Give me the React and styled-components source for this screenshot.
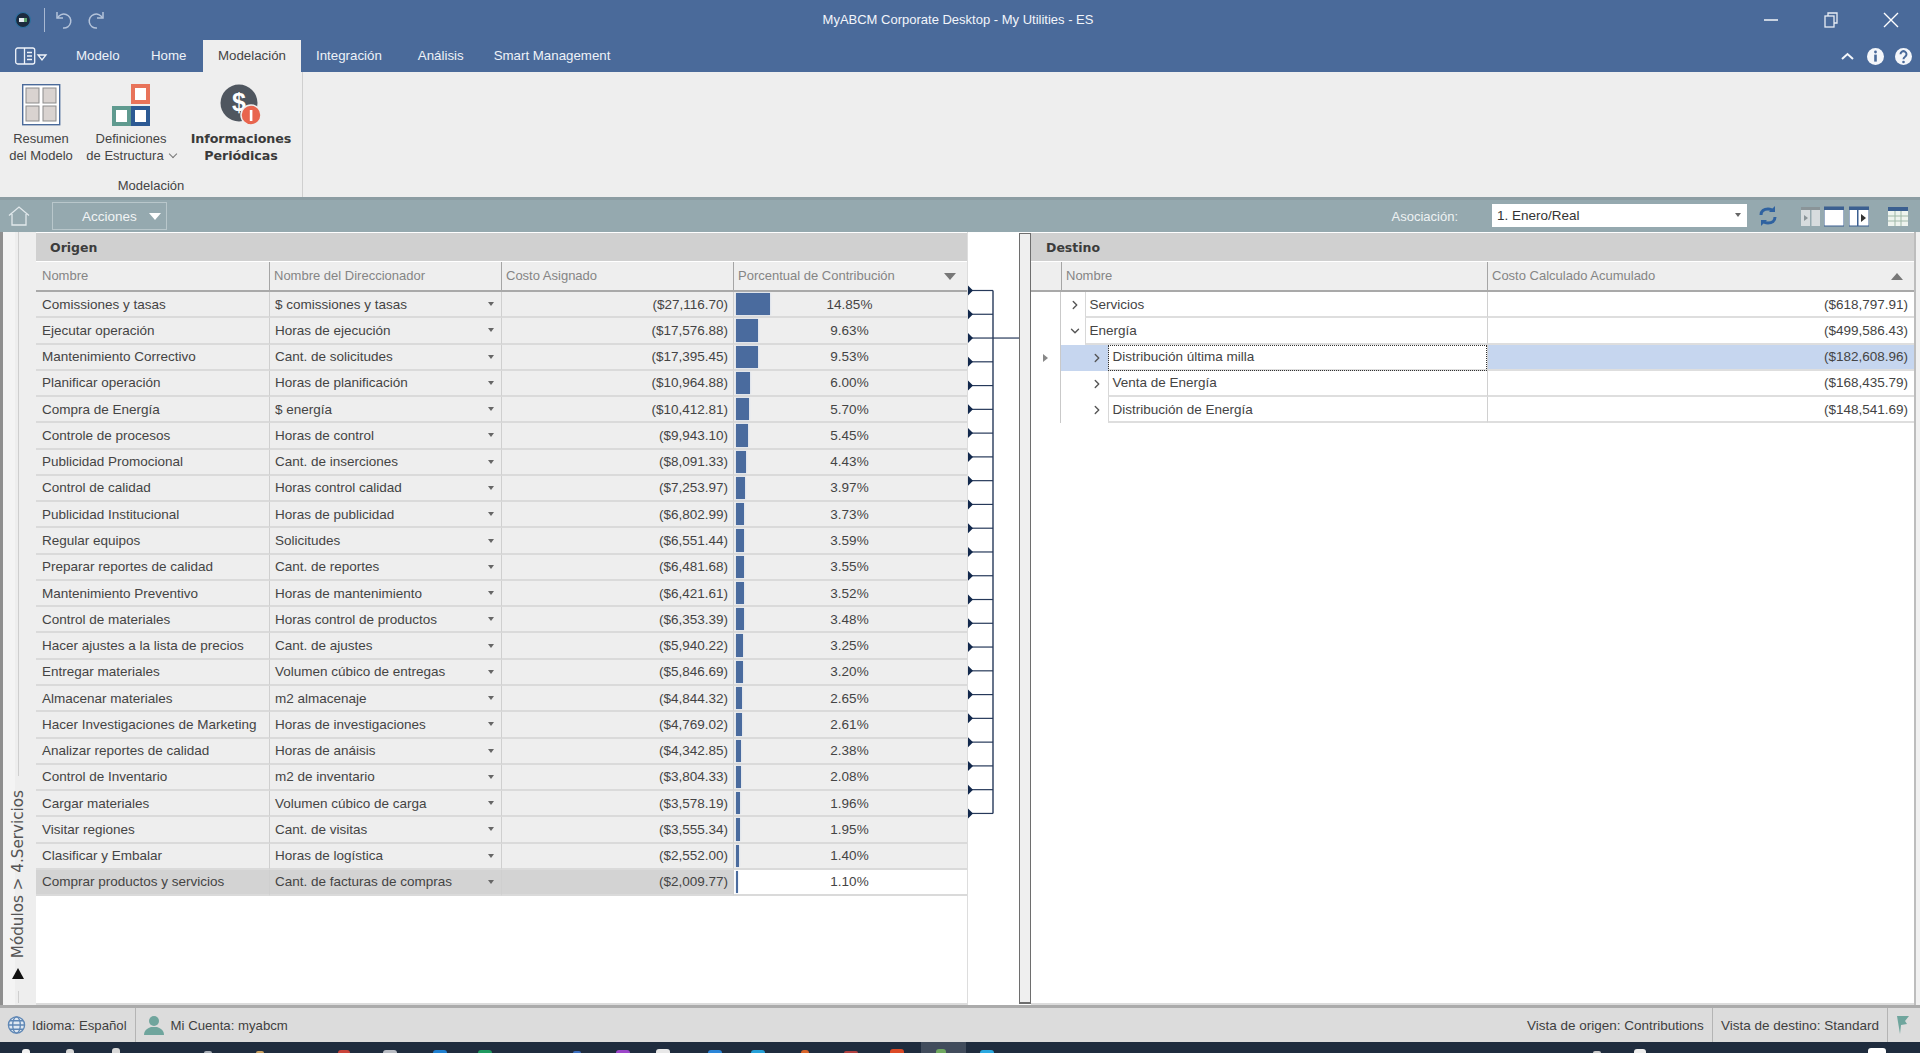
import React from 'react';
import styled, { createGlobalStyle } from 'styled-components';
import { ChevronRight, ChevronDown } from 'lucide-react';

const Global = createGlobalStyle`
  html, body { margin: 0; padding: 0; background: #fff; }
  * { box-sizing: border-box; }
  body { font-family: "Liberation Sans", Arial, sans-serif; }
`;

const ROW = 26.27;
const FONT = '"Liberation Sans", Arial, sans-serif';

const Shell = styled.div`
  width: 1920px; height: 1053px; overflow: hidden; display: flex; flex-direction: column;
  font-family: ${FONT}; font-size: 13.5px; color: #444;
`;
const TitleBar = styled.div`
  height: 40px; flex: none; background: #4a6a9a; display: flex; align-items: center; position: relative;
  padding-left: 13px;
`;
const TitleText = styled.div`
  position: absolute; left: 0; right: 4px; top: 0; height: 40px; line-height: 40px; text-align: center;
  color: #f2f5fa; font-size: 13px;
`;
const QuickSep = styled.div`width: 1px; height: 24px; background: #a8b8d2; margin: 0 9px 0 11px;`;
const QuickIcon = styled.svg`width: 20px; height: 20px; margin-right: 12px; flex: none;`;
const WinControls = styled.div`margin-left: auto; display: flex; z-index: 1; padding-right: 20px; gap: 42px;`;
const WinIcon = styled.svg`width: 18px; height: 18px; display: block;`;

const TabBar = styled.div`
  height: 32px; flex: none; background: #4a6a9a; display: flex; align-items: stretch; padding-left: 15px;
`;
const AppMenu = styled.svg`width: 34px; height: 20px; align-self: center; flex: none; margin-right: 27px;`;
const Tab = styled.div`
  padding: 0 ${p => p.$pad ?? 9}px; margin-right: ${p => p.$gap ?? 0}px; line-height: 32px; color: #eef2f8; font-size: 13.3px;
  ${p => p.$active && 'background:#eeeeee;color:#444;'}
`;
const TabTools = styled.div`margin-left: auto; display: flex; align-items: center; gap: 9px; padding-right: 7px;`;
const ToolGlyph = styled.svg`width: 19px; height: 19px; display: block;`;

const Ribbon = styled.div`height: 125px; flex: none; background: #eeeeee; display: flex;`;
const RibbonGroup = styled.div`
  width: 303px; border-right: 1px solid #cfcfcf; display: flex; flex-direction: column; align-items: stretch;
`;
const RibbonItems = styled.div`display: flex; padding-top: 12px; height: 106px;`;
const RibbonItem = styled.div`
  width: ${p => p.$w}px; display: flex; flex-direction: column; align-items: center; flex: none;
`;
const RibbonIcon = styled.svg`width: 44px; height: 42px; display: block; margin-bottom: 5px;`;
const RibbonLabel = styled.div`
  font-size: 13px; line-height: 16.5px; text-align: center; color: #444; white-space: nowrap;
  ${p => p.$bold && `font-weight: 700; font-family: "DejaVu Sans", sans-serif; font-size: 12.7px; color:#3a3a3a; letter-spacing: -0.1px;`}
`;
const SmallChev = styled.span`
  display: inline-block; width: 6px; height: 6px; border-right: 1.5px solid #777; border-bottom: 1.5px solid #777;
  transform: rotate(45deg); margin: 0 0 3px 6px;
`;
const GroupName = styled.div`text-align: center; font-size: 13px; color: #444; line-height: 16px;`;

const Toolbar = styled.div`
  height: 35px; flex: none; background: #95a9af; border-top: 3px solid #8c9da3; display: flex; align-items: center; padding-left: 8px;
`;
const HomeIcon = styled.svg`width: 22px; height: 20px; margin-right: 22px; flex: none;`;
const ActionBtn = styled.div`
  width: 115px; height: 28px; border: 1px solid #b9c7cb; color: #f1f4f5; display: flex; align-items: center;
  font-size: 13.5px; padding-left: 29px;
`;
const BtnCaret = styled.span`
  margin-left: auto; margin-right: 5px; width: 0; height: 0; border-left: 6px solid transparent; border-right: 6px solid transparent;
  border-top: 7px solid #fff;
`;
const AssocLabel = styled.div`margin-left: auto; color: #eef2f3; font-size: 13px; margin-right: 34px;`;
const AssocSelect = styled.div`
  width: 255px; height: 23px; background: #fff; display: flex; align-items: center; padding-left: 5px; color: #333; font-size: 13.5px;
  margin-right: 11px; margin-bottom: 2px;
`;
const TinyCaret = styled.span`
  margin-left: auto; margin-right: ${p => p.$mr ?? 5}px; width: 0; height: 0; border-left: 3.5px solid transparent; border-right: 3.5px solid transparent;
  border-top: 4px solid #666; flex: none;
`;
const ToolIcon = styled.svg`width: ${p => p.$w ?? 20}px; height: 24px; margin-right: ${p => p.$mr ?? 5}px; flex: none;`;

const Workspace = styled.div`flex: 1; min-height: 0; display: flex; background: #fff;`;
const SideRail = styled.div`
  width: 36px; flex: none; background: #eeeeee; border-left: 3px solid #8f8f8f; display: flex; flex-direction: column;
  align-items: center; padding-right: 3px; padding-bottom: 2px;
  box-shadow: inset 12px 0 0 #f4f4f4;
`;
const RailLine = styled.div`width: 1px; background: #cfcfcf; flex: ${p => (p.$grow ? 1 : 'none')}; height: ${p => p.$h ?? 12}px;`;
const RailText = styled.div`
  writing-mode: vertical-rl; transform: rotate(180deg); font-family: "DejaVu Sans", sans-serif; font-size: 15.2px; color: #555;
  margin: 14px 0 10px; white-space: nowrap;
`;
const RailArrow = styled.span`
  width: 0; height: 0; border-left: 6.5px solid transparent; border-right: 6.5px solid transparent; border-bottom: 11px solid #111;
  margin-bottom: 12px;
`;

const Pane = styled.div`
  width: ${p => p.$w ? p.$w + 'px' : 'auto'}; flex: ${p => (p.$w ? 'none' : 1)}; display: flex; flex-direction: column;
  border-bottom: 2px solid #dcdcdc; padding-top: 1px;
`;
const PaneTitle = styled.div`
  height: 28px; flex: none; background: #d0d0d0; font-weight: 700; font-family: "DejaVu Sans", sans-serif; font-size: 12.5px; color: #3c3c3c; line-height: 29px;
  padding-left: ${p => p.$pl}px;
`;
const HeaderRow = styled.div`
  height: 30px; flex: none; display: grid; grid-template-columns: ${p => p.$cols}; background: #eeeeee; border-bottom: 2px solid #a9a9a9; margin-top: 1px;
`;
const HeaderCell = styled.div`
  border-left: ${p => (p.$first ? 'none' : '1px solid #a5a5a5')}; color: #858585; padding-left: ${p => p.$pl ?? 4}px; line-height: 28px; font-size: 13px;
  display: flex; align-items: center; padding-right: 8px; white-space: nowrap; overflow: hidden;
`;
const SortDown = styled.span`
  margin-left: auto; margin-right: 3px; width: 0; height: 0; border-left: 6px solid transparent; border-right: 6px solid transparent; border-top: 7px solid #777;
`;
const SortUp = styled.span`
  margin-left: auto; margin-right: 3px; width: 0; height: 0; border-left: 6px solid transparent; border-right: 6px solid transparent; border-bottom: 7px solid #777;
`;
const Rows = styled.div`display: grid; grid-auto-rows: ${ROW}px;`;
const SrcRow = styled.div`display: grid; grid-template-columns: 233px 232px 232px 1fr; min-height: 0;`;
const SrcCell = styled.div`
  background: ${p => (p.$sel ? '#d3d3d3' : '#eeeeee')}; border-bottom: 2px solid #dadada; border-left: ${p => (p.$first ? 'none' : '1px solid #cfcfcf')};
  display: flex; align-items: center; padding: 0 5px; white-space: nowrap; overflow: hidden; font-size: 13.5px; color: #444;
  ${p => p.$first && 'padding-left: 6px;'}
  ${p => p.$right && 'justify-content: flex-end;'}
`;
const PctCell = styled.div`
  position: relative; background: ${p => (p.$sel ? '#fff' : '#eeeeee')}; border-bottom: 2px solid #dadada; border-left: 1px solid #cfcfcf;
  display: flex; align-items: center; justify-content: center; font-size: 13.5px; color: #444; padding-right: 2px;
`;
const Bar = styled.div`
  position: absolute; left: 2px; top: 1px; bottom: 1px; background: #4a6b9e; box-shadow: 0 0 2px #c6d4e8;
`;
const Connector = styled.svg`width: 52px; height: 100%; flex: none; display: block; border-left: 1px solid #ddd;`;
const Splitter = styled.div`width: 12px; flex: none; background: #efefef; border: 1px solid #6e6e6e; border-bottom-width: 2px; margin-top: 1px; margin-bottom: 1px;`;
const RightEdge = styled.div`width: 6px; flex: none; background: #f1f1f1; border-left: 2px solid #bdbdbd;`;

const DestRow = styled.div`display: grid; grid-template-columns: 30px 426px 1fr;`;
const Indicator = styled.div`border-right: 1px solid #c9c9c9; display: flex; align-items: center; justify-content: center; padding-right: 0;`;
const RowMark = styled.span`
  width: 0; height: 0; border-top: 4px solid transparent; border-bottom: 4px solid transparent; border-left: 5px solid #888;
`;
const TreeCell = styled.div`display: flex; min-width: 0; background: ${p => (p.$sel ? '#c6d6ef' : '#fff')};`;
const Indent = styled.div`
  width: ${p => p.$w}px; flex: none; display: flex; align-items: center; justify-content: flex-end; padding-right: ${p => p.$pr ?? 4}px; color: #555;
`;
const NameText = styled.div`
  flex: 1; background: #fff; border-left: 1px solid #d8d8d8; border-bottom: 2px solid #dedede; display: flex; align-items: center; padding-left: 3.5px;
  font-size: 13.5px; color: #444; white-space: nowrap;
  ${p => p.$focus && 'outline: 1px dotted #333; outline-offset: -1px;'}
`;
const ValueCell = styled.div`
  background: ${p => (p.$sel ? '#c6d6ef' : '#fff')}; border-left: 1px solid #d0d0d0; border-bottom: 2px solid #dedede; display: flex; align-items: center; justify-content: flex-end;
  padding-right: 6px; font-size: 13.5px; color: #444;
`;

const StatusBar = styled.div`
  height: 37px; flex: none; background: #dcdcdc; border-top: 3px solid #ababab; display: flex; align-items: stretch; color: #3f3f3f;
`;
const StatusItem = styled.div`
  display: flex; align-items: center; gap: ${p => p.$gap ?? 6}px; padding: 0 ${p => p.$pr ?? 8}px 0 ${p => p.$pl ?? 8}px; white-space: nowrap;
  font-size: ${p => p.$fs ?? 13.2}px;
  border-left: ${p => (p.$sep ? '1px solid #b4b4b4' : 'none')};
  ${p => p.$push && 'margin-left: auto;'}
`;
const StatusIcon = styled.svg`width: ${p => p.$w}px; height: 20px; flex: none;`;

const Taskbar = styled.div`
  height: 11px; flex: none; background: #1f2c3e; display: flex; align-items: flex-end; position: relative; overflow: hidden;
`;
const Tip = styled.span`
  position: absolute; left: ${p => p.$x}px; bottom: 0; width: ${p => p.$w ?? 14}px; height: ${p => p.$h ?? 3}px; background: ${p => p.$c};
  border-radius: 3px 3px 0 0;
`;
const ActiveTask = styled.span`position: absolute; left: 921px; width: 45px; top: 0; bottom: 0; background: #414c5c;`;

const src = [
  ['Comissiones y tasas', '$ comissiones y tasas', '($27,116.70)', 14.85],
  ['Ejecutar operación', 'Horas de ejecución', '($17,576.88)', 9.63],
  ['Mantenimiento Correctivo', 'Cant. de solicitudes', '($17,395.45)', 9.53],
  ['Planificar operación', 'Horas de planificación', '($10,964.88)', 6.0],
  ['Compra de Energía', '$ energía', '($10,412.81)', 5.7],
  ['Controle de procesos', 'Horas de control', '($9,943.10)', 5.45],
  ['Publicidad Promocional', 'Cant. de inserciones', '($8,091.33)', 4.43],
  ['Control de calidad', 'Horas control calidad', '($7,253.97)', 3.97],
  ['Publicidad Institucional', 'Horas de publicidad', '($6,802.99)', 3.73],
  ['Regular equipos', 'Solicitudes', '($6,551.44)', 3.59],
  ['Preparar reportes de calidad', 'Cant. de reportes', '($6,481.68)', 3.55],
  ['Mantenimiento Preventivo', 'Horas de mantenimiento', '($6,421.61)', 3.52],
  ['Control de materiales', 'Horas control de productos', '($6,353.39)', 3.48],
  ['Hacer ajustes a la lista de precios', 'Cant. de ajustes', '($5,940.22)', 3.25],
  ['Entregar materiales', 'Volumen cúbico de entregas', '($5,846.69)', 3.2],
  ['Almacenar materiales', 'm2 almacenaje', '($4,844.32)', 2.65],
  ['Hacer Investigaciones de Marketing', 'Horas de investigaciones', '($4,769.02)', 2.61],
  ['Analizar reportes de calidad', 'Horas de anáisis', '($4,342.85)', 2.38],
  ['Control de Inventario', 'm2 de inventario', '($3,804.33)', 2.08],
  ['Cargar materiales', 'Volumen cúbico de carga', '($3,578.19)', 1.96],
  ['Visitar regiones', 'Cant. de visitas', '($3,555.34)', 1.95],
  ['Clasificar y Embalar', 'Horas de logística', '($2,552.00)', 1.4],
  ['Comprar productos y servicios', 'Cant. de facturas de compras', '($2,009.77)', 1.1],
];
const dest = [
  { name: 'Servicios', val: '($618,797.91)', level: 1 },
  { name: 'Energía', val: '($499,586.43)', level: 1, open: true },
  { name: 'Distribución última milla', val: '($182,608.96)', level: 2, sel: true },
  { name: 'Venta de Energía', val: '($168,435.79)', level: 2 },
  { name: 'Distribución de Energía', val: '($148,541.69)', level: 2 },
];
const tips = [
  [22, '#f2f2f2', 8, 4], [66, '#d8d8d8', 8, 4], [112, '#d8d8d8', 8, 5], [204, '#aab0b8', 8, 2], [256, '#c9a060', 8, 2],
  [338, '#c8433a', 12, 3], [383, '#b8bcc4', 14, 3], [433, '#1f7fd0', 14, 3], [478, '#1f9a60', 14, 3], [573, '#3a6fc0', 8, 2],
  [616, '#9b45c8', 14, 3], [656, '#e8e8e8', 14, 4], [708, '#2a85d8', 14, 3], [751, '#25a0d8', 14, 3], [801, '#d8642a', 8, 3],
  [844, '#b04040', 14, 2], [890, '#dc4a26', 14, 4], [936, '#6fa860', 10, 4], [980, '#2aa8e0', 14, 3], [1593, '#c8c8c8', 8, 2],
  [1634, '#eeeeee', 12, 4], [1868, '#ffffff', 18, 5],
];

const stems = Array.from({ length: 23 }, (_, i) => 58.5 + i * 23.77);
const trunkTop = stems[0];
const trunkBottom = stems[22];

const Logo = () => (
  <QuickIcon viewBox="0 0 20 20" style={{ marginRight: 0 }}>
    <circle cx="10" cy="10" r="7.5" fill="#1c2b3f" />
    <circle cx="10" cy="10" r="7.5" fill="none" stroke="#2e6f9e" strokeWidth="1.2" />
    <rect x="6" y="8" width="5" height="4" fill="#e8eef2" />
    <rect x="11" y="8" width="3" height="4" fill="#5fa36f" />
  </QuickIcon>
);

export default function App() {
  return (
    <Shell>
      <Global />
      <TitleBar>
        <Logo />
        <QuickSep />
        <QuickIcon viewBox="0 0 20 20" fill="none" stroke="#b4c3da" strokeWidth="1.5">
          <path d="M3 2v6h6" /><path d="M3.5 8A7 7 0 1 1 9 18" />
        </QuickIcon>
        <QuickIcon viewBox="0 0 20 20" fill="none" stroke="#b4c3da" strokeWidth="1.5">
          <path d="M17 2v6h-6" /><path d="M16.5 8A7 7 0 1 0 11 18" />
        </QuickIcon>
        <TitleText>MyABCM Corporate Desktop - My Utilities - ES</TitleText>
        <WinControls>
          <WinIcon viewBox="0 0 18 18" stroke="#fff" strokeWidth="1.4" fill="none"><path d="M2 9h14" /></WinIcon>
          <WinIcon viewBox="0 0 18 18" stroke="#e8edf5" strokeWidth="1.3" fill="none"><rect x="3" y="5" width="9" height="11" /><path d="M6 5V2h9v10h-3" /></WinIcon>
          <WinIcon viewBox="0 0 18 18" stroke="#fff" strokeWidth="1.4" fill="none"><path d="M2 2l14 14M16 2L2 16" /></WinIcon>
        </WinControls>
      </TitleBar>
      <TabBar>
        <AppMenu viewBox="0 0 34 20" fill="none" stroke="#f0f4fa" strokeWidth="1.3">
          <rect x="0.7" y="2" width="19" height="16" rx="2" />
          <path d="M9.5 2v16M12 6.5h5M12 10h5M12 13.5h5" />
          <path d="M23 9h8l-4 5z" />
        </AppMenu>
        <Tab $pad={0} $gap={31.4}>Modelo</Tab>
        <Tab $pad={0} $gap={16.5}>Home</Tab>
        <Tab $active $pad={15}>Modelación</Tab>
        <Tab $pad={15} $gap={3}>Integración</Tab>
        <Tab $pad={18}>Análisis</Tab>
        <Tab $pad={12}>Smart Management</Tab>
        <TabTools>
          <ToolGlyph viewBox="0 0 19 19" fill="none" stroke="#f4f6fa" strokeWidth="2"><path d="M4 12l5.5-5 5.5 5" /></ToolGlyph>
          <ToolGlyph viewBox="0 0 19 19">
            <circle cx="9.5" cy="9.5" r="8.5" fill="#f4f6fa" />
            <circle cx="9.5" cy="5" r="1.4" fill="#4a6a9a" />
            <rect x="8.2" y="7.6" width="2.6" height="7" fill="#4a6a9a" />
          </ToolGlyph>
          <ToolGlyph viewBox="0 0 19 19">
            <circle cx="9.5" cy="9.5" r="8.5" fill="#f4f6fa" />
            <path d="M6.5 7.2a3 3 0 1 1 4.6 2.5c-1 .7-1.6 1.2-1.6 2.6" fill="none" stroke="#4a6a9a" strokeWidth="2" />
            <circle cx="9.5" cy="15" r="1.3" fill="#4a6a9a" />
          </ToolGlyph>
        </TabTools>
      </TabBar>
      <Ribbon>
        <RibbonGroup>
          <RibbonItems>
            <RibbonItem $w={82}>
              <RibbonIcon viewBox="0 0 44 42">
                <rect x="3.7" y="0.7" width="37" height="40" fill="#fff" stroke="#4a6a9a" strokeWidth="1.4" />
                {[[7, 4], [24, 4], [7, 22], [24, 22]].map(([x, y]) => (
                  <rect key={x + '-' + y} x={x} y={y} width="13" height="15" fill="#d9d3d0" stroke="#8b8b8b" />
                ))}
              </RibbonIcon>
              <RibbonLabel>Resumen<br />del Modelo</RibbonLabel>
            </RibbonItem>
            <RibbonItem $w={98}>
              <RibbonIcon viewBox="0 0 44 42">
                <rect x="24" y="2" width="15" height="16" fill="#fff" stroke="#e8735a" strokeWidth="4" />
                <rect x="5" y="24" width="15" height="16" fill="#fff" stroke="#5f9a8f" strokeWidth="4" />
                <rect x="24" y="24" width="15" height="16" fill="#fff" stroke="#2d5a94" strokeWidth="4" />
              </RibbonIcon>
              <RibbonLabel>Definiciones<br />de Estructura<SmallChev /></RibbonLabel>
            </RibbonItem>
            <RibbonItem $w={122}>
              <RibbonIcon viewBox="0 0 44 42">
                <circle cx="20" cy="19" r="18.5" fill="#4f565f" />
                <text x="20" y="27" textAnchor="middle" fontSize="25" fontWeight="700" fontFamily="Liberation Sans, sans-serif" fill="#fff">$</text>
                <circle cx="32" cy="31" r="10" fill="#e8654e" stroke="#eeeeee" strokeWidth="1.5" />
                <rect x="30.8" y="26" width="2.6" height="11" fill="#fff" />
              </RibbonIcon>
              <RibbonLabel $bold>Informaciones<br />Periódicas</RibbonLabel>
            </RibbonItem>
          </RibbonItems>
          <GroupName>Modelación</GroupName>
        </RibbonGroup>
      </Ribbon>
      <Toolbar>
        <HomeIcon viewBox="0 0 22 20" fill="none" stroke="#e2e9ec" strokeWidth="1.3">
          <path d="M1 9.5L11 1l10 8.5M4 8v11h14V8" />
        </HomeIcon>
        <ActionBtn>Acciones<BtnCaret /></ActionBtn>
        <AssocLabel>Asociación:</AssocLabel>
        <AssocSelect>1. Enero/Real<TinyCaret $mr={6} /></AssocSelect>
        <ToolIcon $w={20} $mr={23} viewBox="0 0 20 24" fill="none" stroke="#2f62a0" strokeWidth="3">
          <path d="M3 11c0-4 3-6 7-6 2 0 4 .5 5 2" /><path d="M17 2v6h-6" fill="#2f62a0" strokeWidth="0" />
          <path d="M17 13c0 4-3 6-7 6-2 0-4-.5-5-2" /><path d="M3 22v-6h6" fill="#2f62a0" strokeWidth="0" />
        </ToolIcon>
        <ToolIcon $w={19} $mr={4} viewBox="0 0 19 24">
          <rect x="0" y="3" width="19" height="19" fill="#d7dcde" />
          <rect x="0" y="3" width="19" height="3" fill="#8a9498" />
          <rect x="9" y="6" width="1.5" height="16" fill="#95a9af" />
          <path d="M3 11l4 3-4 3z" fill="#8a9498" />
        </ToolIcon>
        <ToolIcon $w={20} $mr={5} viewBox="0 0 20 24">
          <rect x="0" y="3" width="20" height="19" fill="#fff" stroke="#3b5f90" strokeWidth="1" />
          <rect x="0" y="3" width="20" height="3" fill="#3b5f90" />
        </ToolIcon>
        <ToolIcon $w={20} $mr={19} viewBox="0 0 20 24">
          <rect x="0" y="3" width="20" height="19" fill="#fff" stroke="#3b5f90" strokeWidth="1" />
          <rect x="0" y="3" width="20" height="3" fill="#3b5f90" />
          <rect x="8" y="6" width="1.5" height="16" fill="#3b5f90" />
          <path d="M12 10l5 4-5 4z" fill="#333" />
        </ToolIcon>
        <ToolIcon $w={20} $mr={12} viewBox="0 0 20 24">
          <rect x="0" y="3" width="20" height="19" fill="#eef3ee" />
          <rect x="0" y="3" width="20" height="4" fill="#3b5f90" />
          <path d="M0 12h20M0 17h20M7 7v15M13 7v15" stroke="#9fb8a8" strokeWidth="1" />
        </ToolIcon>
      </Toolbar>
      <Workspace>
        <SideRail>
          <RailLine $grow />
          <RailText>Módulos &gt; 4.Servicios</RailText>
          <RailArrow />
          <RailLine $h={12} />
        </SideRail>
        <Pane $w={931}>
          <PaneTitle $pl={14}>Origen</PaneTitle>
          <HeaderRow $cols="233px 232px 232px 1fr">
            <HeaderCell $first $pl={6}>Nombre</HeaderCell>
            <HeaderCell>Nombre del Direccionador</HeaderCell>
            <HeaderCell>Costo Asignado</HeaderCell>
            <HeaderCell>Porcentual de Contribución<SortDown /></HeaderCell>
          </HeaderRow>
          <Rows>
            {src.map((r, i) => {
              const sel = i === src.length - 1;
              return (
                <SrcRow key={r[0]}>
                  <SrcCell $first $sel={sel}>{r[0]}</SrcCell>
                  <SrcCell $sel={sel}>{r[1]}<TinyCaret $mr={2} /></SrcCell>
                  <SrcCell $right $sel={sel}>{r[2]}</SrcCell>
                  <PctCell $sel={sel}>
                    <Bar style={{ width: Math.max(2, r[3] * 2.26) }} />
                    {r[3].toFixed(2)}%
                  </PctCell>
                </SrcRow>
              );
            })}
          </Rows>
        </Pane>
        <Connector viewBox="0 0 52 773" preserveAspectRatio="xMinYMin slice">
          <path d={`M25 ${trunkTop}V${trunkBottom}`} stroke="#26395a" strokeWidth="1.4" fill="none" />
          <path d={`M25 ${stems[2]}H52`} stroke="#26395a" strokeWidth="1.2" fill="none" />
          {stems.map(y => (
            <g key={y}>
              <path d={`M3 ${y}H25`} stroke="#26395a" strokeWidth="1.2" fill="none" />
              <path d={`M0 ${y - 5}L5 ${y}L0 ${y + 5}z`} fill="#12284c" />
            </g>
          ))}
        </Connector>
        <Splitter />
        <Pane>
          <PaneTitle $pl={15}>Destino</PaneTitle>
          <HeaderRow $cols="30px 426px 1fr">
            <HeaderCell $first />
            <HeaderCell $pl={4}>Nombre</HeaderCell>
            <HeaderCell $pl={4}>Costo Calculado Acumulado<SortUp /></HeaderCell>
          </HeaderRow>
          <Rows>
            {dest.map(d => (
              <DestRow key={d.name}>
                <Indicator>{d.sel && <RowMark />}</Indicator>
                <TreeCell $sel={d.sel}>
                  <Indent $w={d.level === 1 ? 24 : 47} $pr={d.level === 1 ? 3 : 4}>
                    {d.open ? <ChevronDown size={14} strokeWidth={2.4} /> : <ChevronRight size={14} strokeWidth={2.4} />}
                  </Indent>
                  <NameText $focus={d.sel}>{d.name}</NameText>
                </TreeCell>
                <ValueCell $sel={d.sel}>{d.val}</ValueCell>
              </DestRow>
            ))}
          </Rows>
        </Pane>
        <RightEdge />
      </Workspace>
      <StatusBar>
        <StatusItem $pl={7}>
          <StatusIcon $w={19} viewBox="0 0 20 20" fill="none" stroke="#5f87b5" strokeWidth="1.4">
            <circle cx="10" cy="10" r="8.5" fill="#dfe8f2" />
            <ellipse cx="10" cy="10" rx="4" ry="8.5" />
            <path d="M1.5 10h17M3 5.5h14M3 14.5h14" />
          </StatusIcon>
          Idioma: Español
        </StatusItem>
        <StatusItem $sep $pl={8} $gap={7}>
          <StatusIcon $w={20} viewBox="0 0 20 20" fill="#6fa59d">
            <circle cx="10" cy="6" r="5" />
            <path d="M0 20c0-5 4-7 7-8h6c3 1 7 3 7 8z" />
          </StatusIcon>
          Mi Cuenta: myabcm
        </StatusItem>
        <StatusItem $push $fs={13.5}>Vista de origen: Contributions</StatusItem>
        <StatusItem $sep $fs={13.5}>Vista de destino: Standard</StatusItem>
        <StatusItem $sep $pl={6} $pr={10}>
          <StatusIcon $w={16} viewBox="0 0 16 20" fill="#6fa59d">
            <path d="M3 1h12l-4 5 2 3-6 1-1 9z" />
          </StatusIcon>
        </StatusItem>
      </StatusBar>
      <Taskbar>
        <ActiveTask />
        {tips.map(([x, c, w, h]) => <Tip key={x} $x={x} $c={c} $w={w} $h={h} />)}
      </Taskbar>
    </Shell>
  );
}
